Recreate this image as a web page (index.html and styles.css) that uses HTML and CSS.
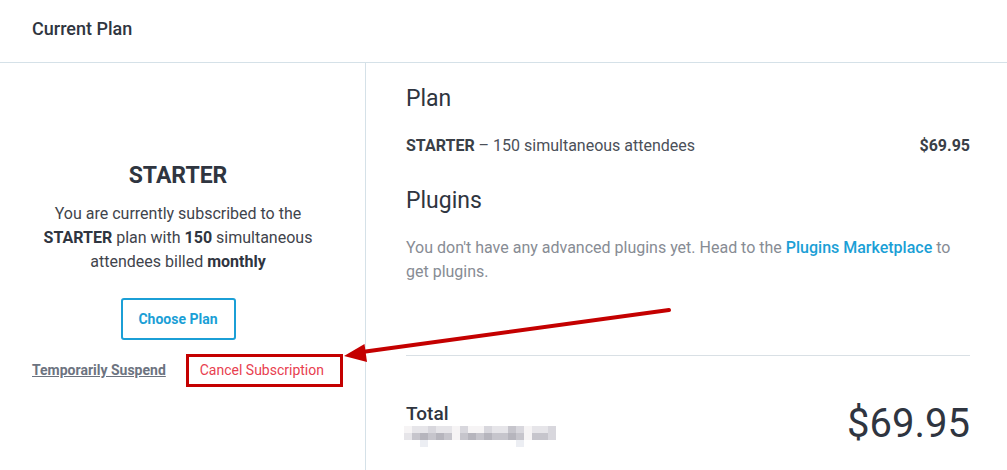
FILE: index.html
```html
<!DOCTYPE html>
<html lang="en">
<head>
<meta charset="utf-8">
<title>Current Plan</title>
<link rel="stylesheet" href="styles.css">
</head>
<body>
<div class="page">
  <header class="page-header">
    <h1 class="page-title">Current Plan</h1>
  </header>
  <main class="layout">
    <section class="summary">
      <h2 class="summary-title">STARTER</h2>
      <p class="summary-text">You are currently subscribed to the <b>STARTER</b> plan with <b>150</b> simultaneous attendees billed <b>monthly</b></p>
      <button class="btn-outline" type="button">Choose Plan</button>
      <div class="summary-links">
        <a class="link-suspend" href="#">Temporarily Suspend</a>
        <span class="cancel-wrap">
          <a class="link-cancel" href="#">Cancel Subscription</a>
          <span class="annot-box"></span>
        </span>
      </div>
    </section>
    <section class="details">
      <h3 class="details-heading">Plan</h3>
      <div class="line-item">
        <span><b>STARTER</b> – 150 simultaneous attendees</span>
        <b class="line-price">$69.95</b>
      </div>
      <h3 class="details-heading plugins-heading">Plugins</h3>
      <p class="plugins-text">You don't have any advanced plugins yet. Head to the <a class="link-blue" href="#">Plugins Marketplace</a> to get plugins.</p>
      <hr class="divider">
      <div class="total-row">
        <div class="total-left">
          <div class="total-label">Total</div>
          <div class="mosaic">
            <i class="w"></i><i class="l"></i><i class="l"></i><i class="m"></i><i class="l"></i><i class="l"></i><i class="w"></i><i class="m"></i><i class="w"></i><i class="w"></i><i class="m"></i><i class="l"></i><i class="l"></i><i class="d"></i><i class="m"></i><i class="w"></i><i class="l"></i><i class="l"></i><i class="m"></i>
            <i class="l"></i><i class="d"></i><i class="k"></i><i class="d"></i><i class="k"></i><i class="d"></i><i class="w"></i><i class="d"></i><i class="k"></i><i class="d"></i><i class="k"></i><i class="d"></i><i class="d"></i><i class="k"></i><i class="d"></i><i class="w"></i><i class="d"></i><i class="d"></i><i class="m"></i>
            <i class="n"></i><i class="n"></i><i class="w"></i><i class="n"></i><i class="n"></i><i class="n"></i><i class="n"></i><i class="n"></i><i class="n"></i><i class="n"></i><i class="n"></i><i class="n"></i><i class="n"></i><i class="n"></i><i class="w"></i><i class="n"></i><i class="n"></i><i class="n"></i><i class="n"></i>
          </div>
        </div>
        <div class="total-price">$69.95</div>
      </div>
    </section>
  </main>
  <svg class="arrow" width="1007" height="470" viewBox="0 0 1007 470" aria-hidden="true">
    <line x1="669" y1="310" x2="362" y2="352" stroke="#c40000" stroke-width="4" stroke-linecap="round"/>
    <polygon points="344,356 364.5,344 367,362" fill="#c40000"/>
  </svg>
</div>
</body>
</html>
```
FILE: styles.css
```css
* { box-sizing: border-box; }
html, body { margin: 0; padding: 0; }
body {
  font-family: Roboto, "Liberation Sans", Arial, sans-serif;
  color: #3a3f47;
  background: #fff;
  width: 1007px;
  height: 470px;
  overflow: hidden;
}
.page { position: relative; height: 470px; }

.page-header {
  height: 63px;
  padding: 17px 32px 0;
  border-bottom: 1px solid #d5e1e8;
}
.page-title {
  margin: 0;
  font-size: 18px;
  line-height: 24px;
  font-weight: 500;
  color: #2f3540;
}

.layout {
  display: grid;
  grid-template-columns: 366px 1fr;
  height: 407px;
}

.summary {
  border-right: 1px solid #d5e1e8;
  padding: 99px 41px 0 32px;
  display: flex;
  flex-direction: column;
  align-items: center;
  text-align: center;
}
.summary-title {
  margin: 0;
  font-size: 23px;
  line-height: 28px;
  font-weight: 700;
  color: #2f3540;
}
.summary-text {
  margin: 12px 0 0;
  font-size: 16px;
  line-height: 24px;
  color: #3f444c;
}
.summary-text b { font-weight: 700; color: #2f3540; }

.btn-outline {
  margin-top: 24px;
  width: 115px;
  height: 42px;
  border: 2px solid #1b9fd6;
  border-radius: 3px;
  background: #fff;
  color: #1b9fd6;
  font-family: inherit;
  font-size: 14px;
  font-weight: 700;
  line-height: 20px;
  padding: 0;
}

.summary-links {
  margin-top: 20px;
  align-self: stretch;
  display: flex;
  justify-content: space-between;
  font-size: 14px;
  line-height: 20px;
}
.link-suspend {
  color: #6c7380;
  font-weight: 700;
  text-decoration: underline;
}
.cancel-wrap { position: relative; }
.link-cancel {
  color: #e8404f;
  text-decoration: none;
}
.annot-box {
  position: absolute;
  left: -14px;
  top: -6px;
  width: 157px;
  height: 33px;
  border: 3px solid #c40000;
}

.details {
  padding: 20px 37px 0 40px;
}
.details-heading {
  margin: 0;
  font-size: 23px;
  line-height: 32px;
  font-weight: 400;
  color: #2f3540;
}
.line-item {
  margin-top: 19px;
  display: flex;
  justify-content: space-between;
  font-size: 16px;
  line-height: 24px;
  color: #4b5059;
}
.line-item b { font-weight: 700; color: #3a3f47; }
.plugins-heading { margin-top: 27px; }
.plugins-text {
  margin: 19px 0 0;
  font-size: 16px;
  line-height: 24px;
  color: #878c94;
}
.link-blue {
  color: #1b9fd6;
  font-weight: 500;
  text-decoration: none;
}
.divider {
  margin: 71px 0 0;
  border: 0;
  border-top: 1px solid #d9e0e5;
  height: 0;
}
.total-row {
  margin-top: 44px;
  display: flex;
  justify-content: space-between;
  align-items: center;
}
.total-label {
  font-size: 19px;
  line-height: 24px;
  font-weight: 500;
  color: #2f3540;
}
.mosaic {
  display: grid;
  grid-template-columns: repeat(19, 8px);
  grid-auto-rows: 7px;
  margin-left: -2px;
}
.mosaic i { display: block; }
.mosaic .w { background: #f6f4f5; }
.mosaic .l { background: #e6e5e9; }
.mosaic .m { background: #d8d7dd; }
.mosaic .d { background: #c6c5cc; }
.mosaic .k { background: #b6b5bd; }
.mosaic .n { background: #fff; }
.mosaic i:nth-child(41), .mosaic i:nth-child(53) { background: #eceef3; }

.total-price {
  font-size: 40px;
  line-height: 48px;
  font-weight: 400;
  color: #2f3540;
}

.arrow {
  position: absolute;
  left: 0;
  top: 0;
  pointer-events: none;
}
```
